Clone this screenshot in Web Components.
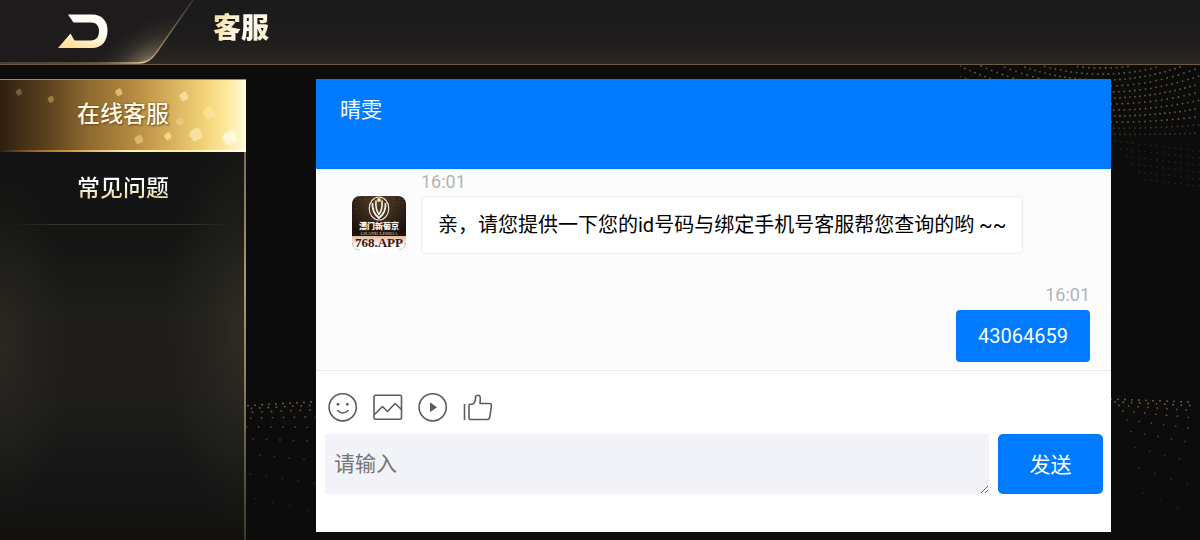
<!DOCTYPE html>
<html lang="zh-CN">
<head>
<meta charset="utf-8">
<meta name="viewport" content="width=device-width, initial-scale=1">
<title>客服</title>
<style>
  body {
    margin: 0;
    background: #0c0c0c;
    font-family: Roboto, "Noto Sans CJK SC", sans-serif;
  }
</style>
</head>
<body>
<service-page>
  <top-bar slot="top">客服</top-bar>
  <side-menu slot="side">
    <menu-item active>在线客服</menu-item>
    <menu-item>常见问题</menu-item>
  </side-menu>
  <chat-panel agent="晴雯">
    <chat-message time="16:01">
      <club-avatar slot="avatar"></club-avatar>亲，请您提供一下您的id号码与绑定手机号客服帮您查询的哟 ~~</chat-message>
    <chat-message time="16:01" mine>43064659</chat-message>
    <chat-composer slot="composer"></chat-composer>
  </chat-panel>
</service-page>

<script>
  class ServicePage extends HTMLElement {
    constructor() {
      super();
      const shadow = this.attachShadow({ mode: 'open' });

      shadow.innerHTML = `
        <style>
          :host {
            display: flex;
            flex-direction: column;
            position: relative;
            min-height: 100vh;
            overflow: hidden;
          }

          dot-field {
            position: absolute;
            inset: 0;
          }

          .body {
            display: flex;
            flex: 1;
            position: relative;
            padding-top: 14px;
          }

          main {
            display: flex;
            flex: 1;
            min-width: 0;
            padding: 0 89px 8px 70px;
          }
        </style>
        <dot-field></dot-field>
        <slot name="top"></slot>
        <div class="body">
          <slot name="side"></slot>
          <main><slot></slot></main>
        </div>
      `;
    }
  }

  // gold dots drawn behind the page
  class DotField extends HTMLElement {
    constructor() {
      super();
      const shadow = this.attachShadow({ mode: 'open' });

      shadow.innerHTML = `
        <style>
          :host {
            display: block;
          }

          svg {
            position: absolute;
            top: 0;
          }

          .left { left: 246px; }
          .right { right: 0; }
        </style>
        <svg class="left" width="70" height="540" aria-hidden="true">${this.fan(-40, 80, 408, 401)}</svg>
        <svg class="right" width="240" height="540" aria-hidden="true">${this.arcs()}${this.fan(151, 232, 399, 402)}</svg>
      `;
    }

    dot(x, y, opacity) {
      return `<circle cx="${x.toFixed(1)}" cy="${y.toFixed(1)}" r="0.9" fill="#9a7a45" opacity="${opacity.toFixed(2)}"/>`;
    }

    fan(from, to, yFrom, yTo) {
      const rows = [0, 3, 7, 13, 22, 34, 50, 70, 94];
      let out = '';
      rows.forEach((dy, row) => {
        const step = 7 + row * 1.3;
        for (let x = from + row * 4; x < to; x += step) {
          const t = (x - from) / (to - from);
          const y = yFrom + (yTo - yFrom) * t + dy * (0.85 + t * 0.35);
          out += this.dot(x, y, Math.max(0.1, 0.85 - row * 0.08));
        }
      });
      return out;
    }

    arcs() {
      let out = '';
      for (let row = 0; row < 19; row++) {
        for (let x = 0; x < 240; x += 5 + (row % 3) * 0.3) {
          const t = (x - 140) / 100;
          const y = 134 - row * 6 - t * t * (3 + row * 2.2) + (t < 0 ? 0 : t * 2);
          if (y > 66) out += this.dot(x, y, row < 2 ? 0.4 : 0.7);
        }
      }
      // the faint lower arcs
      for (let row = 0; row < 6; row++) {
        for (let x = 155 + row * 6; x < 240; x += 6) {
          out += this.dot(x, 141 + row * 7 + (x - 155) * 0.12, 0.2);
        }
      }
      return out;
    }
  }

  class TopBar extends HTMLElement {
    constructor() {
      super();
      const shadow = this.attachShadow({ mode: 'open' });

      shadow.innerHTML = `
        <style>
          :host {
            display: block;
            position: relative;
          }

          header {
            display: flex;
            align-items: flex-start;
            height: 64px;
            border-bottom: 1px solid #6a5c40;
            background: linear-gradient(#1c1b1c 0, #1d1b1b 55%, #2b2722 100%);
          }

          button {
            width: 196px;
            height: 64px;
            padding: 0;
            border: 0;
            background: none;
            cursor: pointer;
          }

          button svg {
            display: block;
          }

          h1 {
            margin: 0;
            padding: 8px 0 0 17px;
            font-size: 28px;
            line-height: 42px;
            font-weight: 900;
            background: linear-gradient(110deg, #f0d685 15%, #fffdf4 65%, #f7ebc5 100%);
            -webkit-background-clip: text;
            background-clip: text;
            color: transparent;
          }
        </style>
        <header>
          <button type="button" aria-label="返回">
            <svg width="196" height="64" viewBox="0 0 196 64">
              <defs>
                <linearGradient id="arrow" x1="0.7" y1="0" x2="0.3" y2="1">
                  <stop offset="0.4" stop-color="#fffdf8"/>
                  <stop offset="1" stop-color="#ffdf98"/>
                </linearGradient>
                <radialGradient id="glow" gradientUnits="userSpaceOnUse" cx="0" cy="0" r="1" gradientTransform="translate(145 64) rotate(-35) scale(80 38)">
                  <stop offset="0" stop-color="#a89875" stop-opacity="0.75"/>
                  <stop offset="0.5" stop-color="#6b6048" stop-opacity="0.3"/>
                  <stop offset="1" stop-color="#3a3428" stop-opacity="0"/>
                </radialGradient>
                <linearGradient id="edge" gradientUnits="userSpaceOnUse" x1="0" y1="0" x2="196" y2="0">
                  <stop offset="0" stop-color="#4f4638"/>
                  <stop offset="0.5" stop-color="#6f634d"/>
                  <stop offset="0.72" stop-color="#dccba2"/>
                  <stop offset="0.82" stop-color="#8d7e62"/>
                  <stop offset="1" stop-color="#332d27"/>
                </linearGradient>
              </defs>
              <path d="M0 0H193L156 53Q149 63 139 63H0Z" fill="#1d1b1c"/>
              <path d="M0 0H193L156 53Q149 63 139 63H0Z" fill="url(#glow)"/>
              <path d="M193 0L156 53Q149 63 139 63H0" fill="none" stroke="url(#edge)" stroke-width="1.4"/>
              <path d="M68 14.500H92C102 14.500 107.500 21 107.500 30C107.500 41 102 48 92 48H58L70.500 33.500L74.500 40.500H91C96 40.500 99 37 99 31C99 25.500 96 22.500 91 22.500H73.500Z" fill="url(#arrow)"/>
            </svg>
          </button>
          <h1><slot></slot></h1>
        </header>
      `;
    }
  }

  class SideMenu extends HTMLElement {
    constructor() {
      super();
      const shadow = this.attachShadow({ mode: 'open' });

      shadow.innerHTML = `
        <style>
          :host {
            display: block;
            width: 246px;
            flex: none;
          }

          nav {
            box-sizing: border-box;
            height: 100%;
            background:
              linear-gradient(#5e5640, #a99a6c 45%, #8b8059 65%, #3c372b) right / 2px 100% no-repeat,
              radial-gradient(80px 210px at 100% 54%, #3a362999, #3a362940 50%, transparent),
              radial-gradient(70px 180px at 0 58%, #332f2599, #332f2540 50%, transparent),
              linear-gradient(#111211 0, #131413 32%, #1e1d1a 52%, #1d1c1a 70%, #141615 87%, #131110 100%);
          }
        </style>
        <nav><slot></slot></nav>
      `;
    }
  }

  class MenuItem extends HTMLElement {
    constructor() {
      super();
      const shadow = this.attachShadow({ mode: 'open' });
      const active = this.hasAttribute('active');
      const spade = 'M0-4.500C2-2.500 4-1.500 4 1C4 3 2 3.500 1 2.500L2 4.500H-2L-1 2.500C-2 3.500-4 3-4 1C-4-1.500-2-2.500 0-4.500Z';
      // x, y, scale, colour
      const spades = [
        [19, 12, 0.8, '#8f7548'], [51, 19, 0.8, '#b99455'], [119, 12, 0.9, '#f4d77d'],
        [184, 16, 1.1, '#ffedb2'], [209, 32, 1.5, '#fbe59f'], [180, 41, 1, '#edcf83'],
        [139, 59, 1.1, '#e9c777'], [168, 56, 0.9, '#ffe9a9'], [196, 54, 1.6, '#fdebb5'],
        [230, 57, 1.8, '#fffdf0']
      ];

      shadow.innerHTML = `
        <style>
          :host {
            display: block;
          }

          a {
            display: block;
            position: relative;
            box-sizing: border-box;
            height: 73px;
            padding-top: 1px;
            font-size: 23px;
            line-height: 72px;
            font-weight: 500;
            text-align: center;
            text-decoration: none;
            color: #fff;
          }

          span {
            position: relative;
            background: linear-gradient(#fff 40%, #e8deb0 75%);
            -webkit-background-clip: text;
            background-clip: text;
            color: transparent;
          }

          a::after {
            content: "";
            position: absolute;
            inset: auto 12px 0;
            height: 1px;
            background: linear-gradient(90deg, transparent, #37362a 20%, #37362a 80%, transparent);
          }

          a.active {
            padding-top: 0;
            border-top: 1px solid #a68a4e;
            line-height: 70px;
            background: linear-gradient(90deg, #2d2011 0, #5d431f 20%, #8b682f 35%, #b58a40 54%, #dcb660 72%, #f3d57b 84%, #feeba0 93%, #fffadf 100%);
          }

          a.active::after {
            inset: auto 0 0;
            height: 2px;
            background: linear-gradient(90deg, transparent, #c88a36 25%, #fff2a8 52%, #ffefa2 80%, #fff);
          }

          .active span {
            background: none;
            color: #fff7e4;
            text-shadow: 1px 1px 2px #6d4a17, 0 0 2px #7b5621;
          }

          svg {
            position: absolute;
            top: 0;
            right: 0;
          }
        </style>
        <a href="#" class="${active ? 'active' : ''}">
          ${active ? `<svg width="246" height="72" aria-hidden="true">${spades.map(([x, y, s, c]) =>
            `<path transform="translate(${x} ${y}) rotate(15) scale(${s})" fill="${c}" opacity="0.7" d="${spade}"/>`).join('')}</svg>` : ''}
          <span><slot></slot></span>
        </a>
      `;
    }
  }

  class ChatPanel extends HTMLElement {
    constructor() {
      super();
      const shadow = this.attachShadow({ mode: 'open' });

      shadow.innerHTML = `
        <style>
          :host {
            display: flex;
            flex-direction: column;
            flex: 1;
            min-width: 0;
            background: #fff;
          }

          header {
            box-sizing: border-box;
            min-height: 90px;
            padding: 16px 24px;
            background: #007bff;
            color: #fff;
          }

          h2 {
            margin: 0;
            font-size: 21px;
            line-height: 30px;
            font-weight: 400;
          }

          section {
            display: flex;
            flex: 1;
            flex-direction: column;
            gap: 28px;
            padding: 0 21px 8px 36px;
            border-bottom: 1px solid #e6e6e6;
            background: #fcfcfc;
          }
        </style>
        <header><h2></h2></header>
        <section><slot></slot></section>
        <slot name="composer"></slot>
      `;
      shadow.querySelector('h2').textContent = this.getAttribute('agent');
    }
  }

  class ChatMessage extends HTMLElement {
    constructor() {
      super();
      const shadow = this.attachShadow({ mode: 'open' });

      shadow.innerHTML = `
        <style>
          :host {
            display: grid;
            grid-template-columns: auto 1fr;
            column-gap: 15px;
            justify-items: start;
          }

          time {
            grid-column: 2;
            padding-bottom: 1px;
            font-size: 18px;
            line-height: 26px;
            color: #b4b4b4;
          }

          .avatar {
            grid-column: 1;
          }

          p {
            grid-column: 2;
            margin: 0;
            padding: 14px 16px;
            border: 1px solid #ededed;
            border-radius: 4px;
            background: #fff;
            color: #000;
            font-size: 20px;
            line-height: 28px;
          }

          :host([mine]) {
            justify-items: end;
          }

          :host([mine]) p {
            margin-top: 1px;
            padding: 12px 22px;
            border: 0;
            background: #007bff;
            color: #fff;
          }
        </style>
        <time></time>
        <div class="avatar"><slot name="avatar"></slot></div>
        <p><slot></slot></p>
      `;
      shadow.querySelector('time').textContent = this.getAttribute('time');
    }
  }

  class ClubAvatar extends HTMLElement {
    constructor() {
      super();
      const shadow = this.attachShadow({ mode: 'open' });

      shadow.innerHTML = `
        <style>
          :host {
            display: flex;
            flex-direction: column;
            align-items: center;
            width: 54px;
            height: 54px;
            overflow: hidden;
            border-radius: 8px;
            background: radial-gradient(circle at 50% 10%, #57402a, #1d120c 65%);
            white-space: nowrap;
          }

          svg {
            flex: none;
          }

          b {
            font-size: 8px;
            line-height: 9px;
            font-weight: 900;
            color: #fff;
          }

          small {
            font: 5px/5px "Liberation Serif", serif;
            color: #d9c7a8;
          }

          strong {
            align-self: stretch;
            margin-top: auto;
            background: linear-gradient(#dfb99c, #fff 70%);
            font: bold 13px/14px "Liberation Serif", serif;
            text-align: center;
            color: #42140f;
          }
        </style>
        <svg width="54" height="26" viewBox="0 0 54 26" aria-hidden="true">
          <path d="M4 0V14M8 0V9M13 0V6M42 0V7M47 0V12M51 0V8" stroke="#76552f" stroke-width="0.8" stroke-dasharray="1 2"/>
          <g fill="none" stroke="#f5efe4">
            <ellipse cx="27" cy="12.500" rx="9.800" ry="11.500" stroke-width="1.1"/>
            <path d="M20.500 7C20 14 23 19 27 22C31 19 34 14 33.500 7" stroke-width="1.8"/>
            <path d="M24 4.500C23.500 11 25 16 27 18.500C29 16 30.500 11 30 4.500" stroke-width="1.6"/>
          </g>
          <circle cx="27" cy="4" r="2" fill="#ffd9a0"/>
        </svg>
        <b>澳门新葡京</b>
        <small>GRAND LISBOA</small>
        <strong>768.APP</strong>
      `;
    }
  }

  class ChatComposer extends HTMLElement {
    constructor() {
      super();
      const shadow = this.attachShadow({ mode: 'open' });

      shadow.innerHTML = `
        <style>
          :host {
            display: block;
          }

          form {
            padding: 21px 8px 38px 9px;
          }

          .tools {
            display: flex;
            gap: 15px;
            padding: 0 3px 12px;
          }

          .tools button {
            width: 30px;
            height: 30px;
            padding: 0;
            border: 0;
            background: none;
            cursor: pointer;
          }

          .tools svg {
            display: block;
            fill: none;
            stroke: #5c5c5c;
            stroke-width: 1.6;
            stroke-linejoin: round;
          }

          .tools .solid {
            fill: #5c5c5c;
            stroke: none;
          }

          .row {
            display: flex;
            gap: 9px;
          }

          textarea {
            flex: 1;
            min-width: 0;
            height: 60px;
            box-sizing: border-box;
            padding: 15px 9px;
            border: 0;
            background: #f2f3f8;
            font: inherit;
            font-size: 21px;
            line-height: 30px;
            overflow: hidden;
            resize: vertical;
          }

          textarea::placeholder {
            color: #757575;
          }

          .send {
            width: 105px;
            height: 60px;
            padding: 0 0 2px;
            border: 0;
            border-radius: 5px;
            background: #007bff;
            color: #fff;
            font: inherit;
            font-size: 21px;
            cursor: pointer;
          }
        </style>
        <form>
          <div class="tools">
            <button type="button" aria-label="表情">
              <svg width="30" height="30" viewBox="0 0 30 30">
                <circle cx="14.700" cy="15.300" r="13.600"/>
                <path d="M9.500 18.500Q14.700 23.500 20 18.500" stroke-linecap="round"/>
                <circle class="solid" cx="10" cy="12.300" r="1.400"/>
                <circle class="solid" cx="19.400" cy="12.300" r="1.400"/>
              </svg>
            </button>
            <button type="button" aria-label="图片">
              <svg width="30" height="30" viewBox="0 0 30 30">
                <rect x="1" y="3.200" width="27.500" height="24" rx="1.500"/>
                <path d="M1.500 22.500L9.500 14.500L14.500 19.500L22 11.500L28.500 17.500"/>
              </svg>
            </button>
            <button type="button" aria-label="视频">
              <svg width="30" height="30" viewBox="0 0 30 30">
                <circle cx="14.700" cy="15.300" r="13.600"/>
                <path class="solid" d="M12 10.300V20.300L19 15.300Z"/>
              </svg>
            </button>
            <button type="button" aria-label="评价">
              <svg width="30" height="30" viewBox="0 0 30 30">
                <path d="M1.500 12V28"/>
                <path d="M6 13Q6 12.200 7 12.200H9.500Q12.300 11 12.500 6.500V5Q13 3.200 14.800 3.200Q17.500 3.200 17.300 7L17 11.500H26.500Q28.800 11.500 28.400 14L26.800 25Q26.300 27.500 24 27.500H7.500Q6 27.500 6 26Z"/>
              </svg>
            </button>
          </div>
          <div class="row">
            <textarea aria-label="请输入" placeholder="请输入"></textarea>
            <button type="button" class="send">发送</button>
          </div>
        </form>
      `;
    }
  }

  customElements.define('service-page', ServicePage);
  customElements.define('dot-field', DotField);
  customElements.define('top-bar', TopBar);
  customElements.define('side-menu', SideMenu);
  customElements.define('menu-item', MenuItem);
  customElements.define('chat-panel', ChatPanel);
  customElements.define('chat-message', ChatMessage);
  customElements.define('club-avatar', ClubAvatar);
  customElements.define('chat-composer', ChatComposer);
</script>
</body>
</html>
